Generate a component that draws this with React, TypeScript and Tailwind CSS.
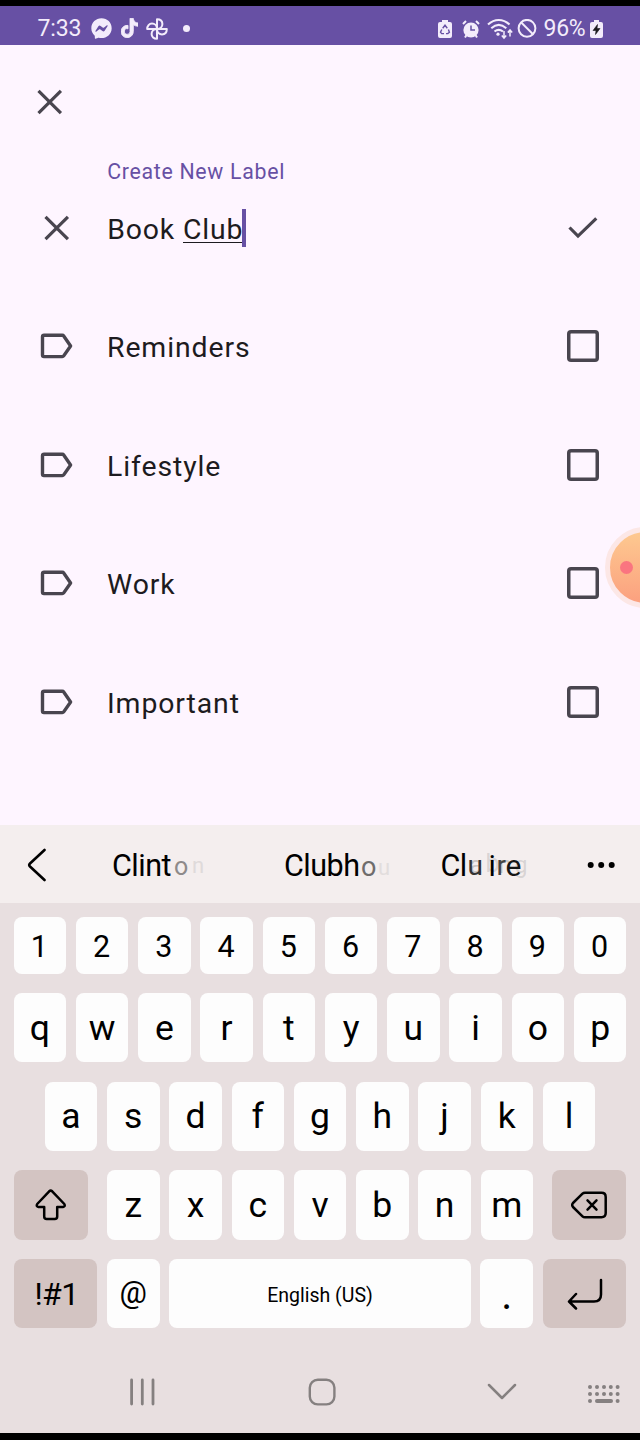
import type { ReactNode } from "react";
import { FaFacebookMessenger, FaTiktok } from "react-icons/fa6";

const labels = ["Reminders", "Lifestyle", "Work", "Important"];

function StatusBar() {
  return (
    <header className="flex h-[39px] shrink-0 items-center bg-[#6750a4] pl-[37.5px] text-[#f3ecfb]">
      <span className="mt-[6px] w-[53px] text-[23px] leading-[28px] tracking-[-0.1px]">7:33</span>
      <FaFacebookMessenger className="mt-[6px] h-[21px] w-[21px]" />
      <FaTiktok className="mt-[5px] ml-[9px] h-[20px] w-[17px]" stroke="currentColor" strokeWidth="22" />
      <svg className="mt-[6px] ml-[8px]" width="22" height="22" viewBox="0 0 22 22" fill="none" stroke="currentColor" strokeWidth="2" strokeLinejoin="round">
        <path d="M11 11V1.2c3.3 0 5.4 2 5.4 4.800 0 2.600-2 5-5.400 5Z" />
        <path d="M11 11h9.800c0 3.300-2 5.400-4.800 5.400-2.600 0-5-2-5-5.400Z" />
        <path d="M11 11v9.800c-3.300 0-5.400-2-5.400-4.800 0-2.600 2-5 5.400-5Z" />
        <path d="M11 11H1.200c0-3.300 2-5.400 4.800-5.400 2.600 0 5 2 5 5.400Z" />
      </svg>
      <span className="mt-[5px] ml-[15px] h-[7px] w-[7px] rounded-full bg-current" />
      <div className="ml-auto flex items-center pt-[6px] pr-[37px]">
        <svg width="14" height="20" viewBox="0 0 14 20">
          <path fill="currentColor" d="M4 1h6v2h2q2 0 2 2v12q0 2-2 2H2q-2 0-2-2V5q0-2 2-2h2Z" />
          <path d="m4.700 9.200 2.300-3 2.300 3M10.400 10.500l1 2.700-1.600 1.400H8M6 14.600H3.700l-1.200-1.400 1.300-2.700" fill="none" stroke="#6750a4" strokeWidth="1.400" />
        </svg>
        <svg className="ml-[9.500px]" width="18" height="20" viewBox="0 0 18 20">
          <circle cx="9" cy="11" r="7.600" fill="currentColor" />
          <path d="m1 5 3-3M14 2l3 3M4.500 16 3 18.500M13.500 16l1.500 2.500" stroke="currentColor" strokeWidth="2" />
          <path d="M9 6.500V11h4" fill="none" stroke="#6750a4" strokeWidth="1.500" />
        </svg>
        <svg className="ml-[7.500px]" width="27" height="22" viewBox="0 0 27 22" fill="none" stroke="currentColor" strokeWidth="2.100">
          <path d="M1 6.500c6.500-6 15-6 21.500 0M4.300 10.200c4.700-4.200 10.200-4.200 15 0M7.500 13.500c2.600-2.100 5.800-2.100 8.500 0" />
          <circle cx="11" cy="16.200" r="1.600" fill="currentColor" stroke="none" />
          <path d="M17 13v7M14.800 17.500l2.200 2.500 2.200-2.500M23 18.500v-6.500M20.800 14.500l2.200-2.500 2.200 2.500" strokeWidth="1.500" />
        </svg>
        <svg className="ml-[3px]" width="20" height="20" viewBox="0 0 20 20" fill="none" stroke="currentColor" strokeWidth="2">
          <circle cx="10" cy="9.300" r="8.400" />
          <path d="m4 3.300 12 12" />
        </svg>
        <span className="ml-[6.500px] w-[46.500px] text-[23px] leading-[28px] tracking-[-0.3px]">96%</span>
        <svg width="13" height="20" viewBox="0 0 13 20">
          <path fill="currentColor" d="M4 1h5v2h2q2 0 2 2v12q0 2-2 2H2q-2 0-2-2V5q0-2 2-2h2Z" />
          <path d="M7.500 5.500 3 11.500h3l-.5 4L10 9.500H7Z" fill="#1d1b20" stroke="#1d1b20" strokeWidth=".6" />
        </svg>
      </div>
    </header>
  );
}

function CloseIcon() {
  return (
    <svg width="26" height="26" viewBox="0 0 26 26" fill="none" stroke="#49454f" strokeWidth="3.200">
      <path d="m1.500 1.800 22.400 22.400M23.900 1.800 1.500 24.200" />
    </svg>
  );
}

function LabelRow({ name }: { name: string }) {
  return (
    <li className="flex h-[118.500px] items-center pr-[41px] pl-[40px]">
      <svg className="mb-[1px]" width="34" height="26" viewBox="0 0 34 26" fill="none" stroke="#49454f" strokeWidth="3.400" strokeLinejoin="round">
        <path d="M4 2.200h18.300q.9 0 1.400.7L30.600 13l-6.900 9.900q-.5.700-1.400.7H4q-1.500 0-1.500-1.500v-18.400Q2.500 2.200 4 2.200Z" />
      </svg>
      <span className="mt-[3px] ml-[33px] flex-1 text-[28.400px] leading-[36px] tracking-[0.900px]">{name}</span>
      <span className="mb-[1px] h-[32px] w-[32px] rounded-[4px] shadow-[inset_0_0_0_3.5px_#49454f]" />
    </li>
  );
}

function Key({ children, className = "w-[52.500px] bg-[#fdfdfd] text-[35.500px]" }: { children: ReactNode; className?: string }) {
  return <button className={`flex h-full shrink-0 items-center justify-center rounded-[8px] ${className}`}>{children}</button>;
}

function LetterRow({ letters }: { letters: string }) {
  return (
    <div className="flex h-[69.500px] justify-center gap-[9.750px]">
      {letters.split("").map((c) => (
        <Key key={c}><span className="leading-[40px]">{c}</span></Key>
      ))}
    </div>
  );
}

function Suggestions() {
  return (
    <div className="flex h-[78px] shrink-0 items-center bg-[#f4eeee] text-[30.500px] leading-[36px] tracking-[-0.500px]">
      <svg className="mt-[2px] ml-[27px]" width="20" height="34" viewBox="0 0 20 34" fill="none" stroke="#000" strokeWidth="2.600" strokeLinecap="round" strokeLinejoin="round">
        <path d="M17.500 2 3 15.500q-1.500 1.500 0 3L17.500 32" />
      </svg>
      <span className="relative ml-[65px] w-[172px] pt-[4px]">
        Clint
        <span className="absolute top-[5px] left-[62px] text-[25px] text-[#8e8a8a]">o</span>
        <span className="absolute top-[4px] left-[80px] text-[22px] text-[#dfdada]">n</span>
      </span>
      <span className="relative w-[156.500px] pt-[4px]">
        Clubh
        <span className="absolute top-[5px] left-[77px] text-[27px] text-[#6f6c6c]">o</span>
        <span className="absolute top-[6px] left-[94px] text-[22px] text-[#e2dddd]">u</span>
      </span>
      <span className="relative w-[146.500px] pt-[4px]">
        Cl
        <span className="absolute top-[3px] left-[29px] text-[24px] text-[#8886]">a</span>
        <span className="absolute top-[2px] left-[45px] text-[25px] text-[#8884]">b</span>
        <span className="absolute top-[3px] left-[58px] text-[24px] text-[#8886]">n</span>
        <span className="absolute top-[4px] left-[74px] text-[23px] text-[#8884]">g</span>
        <span className="absolute top-[4px] left-[27px] text-[28px] text-[#333]">u</span>
        <span className="absolute top-[4px] left-[48px] text-[30px]">i</span>
        <span className="absolute top-[4px] left-[56px] text-[28px] text-[#444]">r</span>
        <span className="absolute top-[4px] left-[65px] text-[30px] text-[#151515]">e</span>
      </span>
      <svg className="mt-[2px]" width="28" height="8" viewBox="0 0 28 8">
        <circle cx="3.700" cy="4" r="3" />
        <circle cx="14.200" cy="4" r="3" />
        <circle cx="24.700" cy="4" r="3" />
      </svg>
    </div>
  );
}

function Keyboard() {
  return (
    <section className="flex h-[447px] shrink-0 flex-col gap-[19.150px] bg-[#e8dfe0] pt-[14px]">
      <div className="flex h-[56.800px] justify-center gap-[9.750px]">
        {"1234567890".split("").map((n) => (
          <Key key={n} className="w-[52.500px] bg-[#fdfdfd] text-[30.500px]"><span className="mt-[4px] mr-[1px] leading-[36px]">{n}</span></Key>
        ))}
      </div>
      <LetterRow letters="qwertyuiop" />
      <LetterRow letters="asdfghjkl" />
      <div className="flex h-[69.500px] justify-center gap-[19px]">
        <Key className="w-[74.400px] bg-[#d3c4c2]">
          <svg width="32" height="32" viewBox="0 0 32 32" fill="none" stroke="#000" strokeWidth="2.500" strokeLinejoin="round">
            <path d="M14.200 2.300q1.500-1.300 3 0L29.300 15q1.300 2.500-1.300 3h-5.800v9.500q0 2.500-2.500 2.500h-8q-2.500 0-2.500-2.500V18H3.500q-2.600-.5-1.300-3Z" />
          </svg>
        </Key>
        <LetterRow letters="zxcvbnm" />
        <Key className="w-[74.400px] bg-[#d3c4c2]">
          <svg width="36" height="28" viewBox="0 0 36 28" fill="none" stroke="#000" strokeWidth="2.500" strokeLinejoin="round" strokeLinecap="round">
            <path d="M14 1.700h16.500q4.200 0 4.200 4.200v16.200q0 4.200-4.200 4.200H14q-1.500 0-2.500-1L2 16q-1.600-2 0-4l9.500-9.300q1-1 2.500-1Z" />
            <path d="m16.500 9.300 9 9.400M25.500 9.300l-9 9.400" />
          </svg>
        </Key>
      </div>
      <div className="flex h-[69.500px] justify-center gap-[9.850px]">
        <Key className="w-[83.500px] bg-[#d3c4c2] text-[32px] tracking-[-0.600px]"><span className="ml-[2px]">!#1</span></Key>
        <Key className="w-[52.500px] bg-[#fdfdfd] text-[30.500px]"><span className="mb-[2px]">@</span></Key>
        <Key className="w-[301.200px] bg-[#fdfdfd] text-[19.500px]"><span className="mt-[4px]">English (US)</span></Key>
        <Key className="w-[52.500px] bg-[#fdfdfd] text-[42px]"><span className="mt-[2px]">.</span></Key>
        <Key className="w-[83.500px] bg-[#d3c4c2]">
          <svg className="mt-[1px]" width="36" height="32" viewBox="0 0 36 32" fill="none" stroke="#000" strokeWidth="2.500" strokeLinecap="round" strokeLinejoin="round">
            <path d="M34 2v14.500q0 7-7 7H3M9 16l-7 7.500L9 30.500" />
          </svg>
        </Key>
      </div>
    </section>
  );
}

function NavigationBar() {
  return (
    <nav className="flex h-[83px] shrink-0 items-center bg-[#e8dfe0] pl-[130px] text-[#858080]">
      <svg width="28" height="28" viewBox="0 0 28 28" stroke="currentColor" strokeWidth="2.800" strokeLinecap="round">
        <path d="M1.600 2v24M12.300 2v24M23 2v24" />
      </svg>
      <svg className="ml-[150px]" width="28" height="28" viewBox="0 0 28 28" fill="none" stroke="currentColor" strokeWidth="2.400">
        <rect x="1.800" y="1.800" width="24.600" height="24.600" rx="8" />
      </svg>
      <svg className="ml-[151px]" width="30" height="18" viewBox="0 0 30 18" fill="none" stroke="currentColor" strokeWidth="2.500" strokeLinecap="round" strokeLinejoin="round">
        <path d="m2 2 13 13L28 2" />
      </svg>
      <svg className="mt-[4px] ml-[70px]" width="34" height="20" viewBox="0 0 34 20" fill="currentColor">
        {[3, 10].map((y) => [3, 10, 17, 23.800, 30.600].map((x) => <circle key={`${x}-${y}`} cx={x} cy={y} r="2" />))}
        <circle cx="3" cy="17" r="2" />
        <rect x="8" y="15" width="18" height="4" rx="2" />
        <circle cx="30.600" cy="17" r="2" />
      </svg>
    </nav>
  );
}

export default function App() {
  return (
    <div className="relative flex h-[1440px] w-[640px] flex-col overflow-hidden border-t-[6px] border-b-[7px] border-black bg-[#fef5ff] font-['Roboto',sans-serif] text-[#1d1b20]">
      <StatusBar />
      <main className="h-[780px] shrink-0 overflow-hidden">
        <div className="flex h-[111px] items-start pt-[44px] pl-[37px]">
          <CloseIcon />
        </div>
        <div className="flex h-[131.500px] items-start">
          <div className="mt-[59px] ml-[44px] w-[63.200px]"><CloseIcon /></div>
          <div className="flex-1">
            <div className="pt-[2px] text-[21.300px] leading-[28px] tracking-[0.710px] text-[#6750a4]">Create New Label</div>
            <div className="mt-[23px] flex h-[38px] text-[28.400px] leading-[42px] tracking-[0.850px]">
              <span className="whitespace-pre">Book </span>
              <span className="h-[34px] border-b-[1.500px] border-[#1d1b20]">Club</span>
              <span className="-ml-[1px] h-[38px] w-[4px] bg-[#6750a4]" />
            </div>
          </div>
          <svg className="mt-[61px] mr-[42px]" width="30" height="22" viewBox="0 0 30 22" fill="none" stroke="#49454f" strokeWidth="3.200">
            <path d="m1.500 10.500 8.500 8.600L28.300 1.400" />
          </svg>
        </div>
        <ul>
          {labels.map((name) => <LabelRow key={name} name={name} />)}
        </ul>
      </main>
      <div className="absolute top-[521px] left-[605px] flex h-[81px] w-[81px] items-center rounded-full border-[5px] border-[#fce7e6] bg-linear-to-b from-[#fdc990] to-[#fba07f]">
        <span className="ml-[10px] h-[13px] w-[13px] rounded-full bg-[#fa7580]" />
      </div>
      <div className="flex flex-col text-black">
        <Suggestions />
        <Keyboard />
        <NavigationBar />
      </div>
    </div>
  );
}
